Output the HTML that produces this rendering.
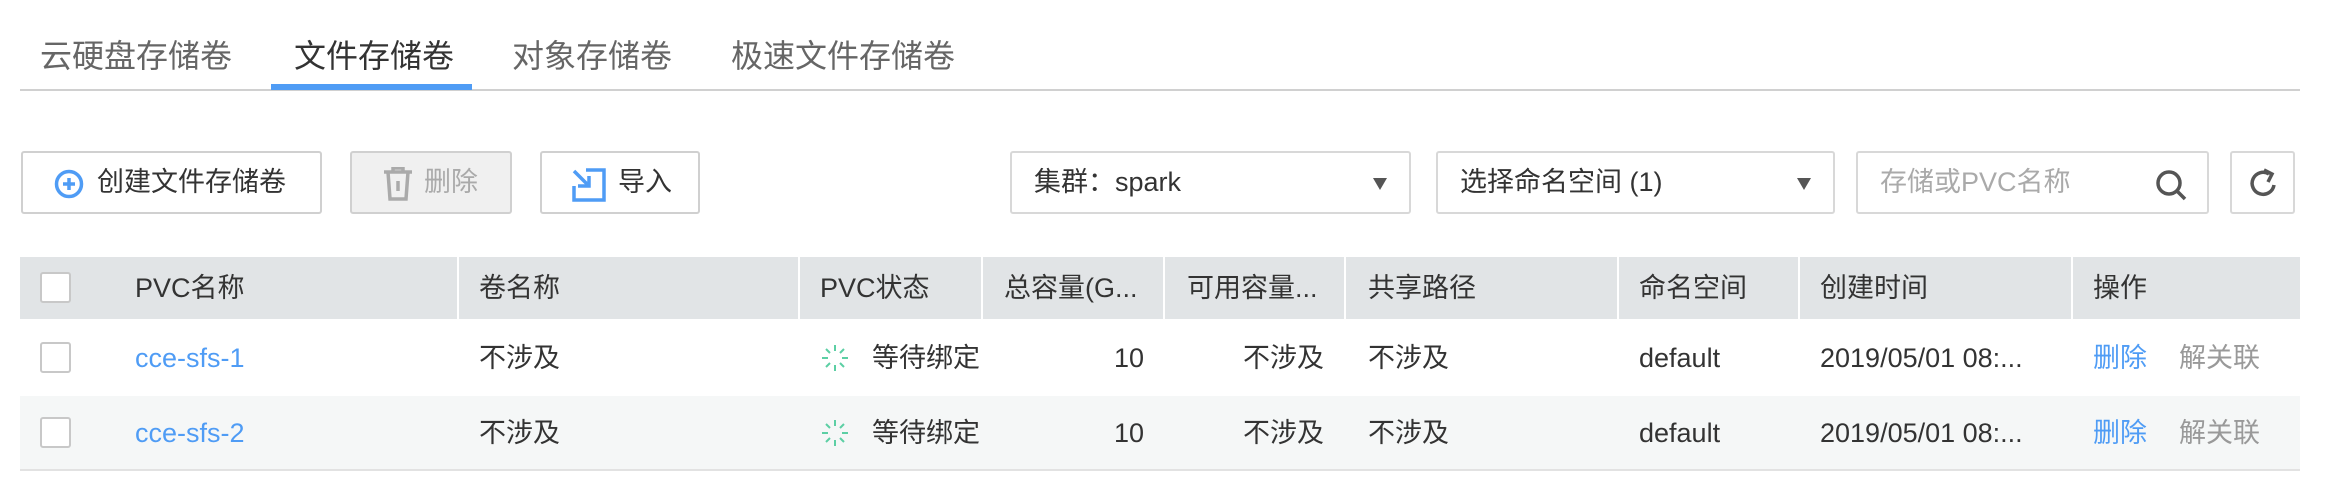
<!DOCTYPE html>
<html><head><meta charset="utf-8"><style>
*{margin:0;padding:0;box-sizing:border-box}
body{width:2326px;height:500px;background:#fff;position:relative;overflow:hidden;font-family:"Liberation Sans","Noto Sans CJK SC",sans-serif;color:#333}
.a{position:absolute;white-space:nowrap}
.tab{position:absolute;top:34px;font-size:32px;color:#666;line-height:44px}
.btn{position:absolute;top:151px;height:63px;border:2px solid #d0d0d0;border-radius:3px;background:#fff;font-size:27px;line-height:59px}
.sel{position:absolute;top:151px;height:63px;border:2px solid #d8d8d8;border-radius:3px;font-size:27px;line-height:59px;padding-left:22px}
.tri{position:absolute;right:22px;top:25px;width:0;height:0;border-left:7px solid transparent;border-right:7px solid transparent;border-top:12px solid #555}
.hd{position:absolute;top:257px;height:62px;background:#e1e4e6;left:20px;width:2280px}
.vl{position:absolute;top:257px;height:62px;width:2px;background:#fff}
.t{position:absolute;font-size:27px;line-height:30px;white-space:nowrap}
.cb{position:absolute;left:40px;width:31px;height:31px;border:2px solid #c8c8c8;border-radius:3px;background:#fff}
</style></head><body>
<div class="tab" style="left:40px">云硬盘存储卷</div>
<div class="tab" style="left:294px;color:#333">文件存储卷</div>
<div class="tab" style="left:512px">对象存储卷</div>
<div class="tab" style="left:731px">极速文件存储卷</div>
<div class="a" style="left:20px;top:89px;width:2280px;height:2px;background:#d0d0d0"></div>
<div class="a" style="left:271px;top:84px;width:201px;height:6px;background:#4f9cf5"></div>

<div class="btn" style="left:21px;width:301px">
<svg class="a" style="left:31px;top:16px" width="30" height="30" viewBox="0 0 30 30"><circle cx="15" cy="15" r="12.5" fill="none" stroke="#4f9cf5" stroke-width="3.5"/><path d="M15 9v12M9 15h12" stroke="#4f9cf5" stroke-width="3.5"/></svg>
<span class="a" style="left:74px">创建文件存储卷</span></div>
<div class="btn" style="left:350px;width:162px;background:#f0f0f0;color:#aaa">
<svg class="a" style="left:30px;top:14px" width="32" height="34" viewBox="0 0 32 34"><path d="M2 5h28M11 5V1h10v4M6 5l2 27h16l2-27M16 14v10" fill="none" stroke="#aaa" stroke-width="3.5"/></svg>
<span class="a" style="left:72px">删除</span></div>
<div class="btn" style="left:540px;width:160px">
<svg class="a" style="left:30px;top:15px" width="34" height="34" viewBox="0 0 34 34"><path d="M14 2h18v30H2V18" fill="none" stroke="#4f9cf5" stroke-width="3.5"/><path d="M2 3l14 14M6 18h11V8" fill="none" stroke="#4f9cf5" stroke-width="3.5"/></svg>
<span class="a" style="left:76px">导入</span></div>

<div class="sel" style="left:1010px;width:401px">集群：spark<div class="tri"></div></div>
<div class="sel" style="left:1436px;width:399px">选择命名空间 (1)<div class="tri"></div></div>
<div class="sel" style="left:1856px;width:353px;color:#aaa">存储或PVC名称
<svg class="a" style="right:20px;top:16px" width="32" height="32" viewBox="0 0 32 32"><circle cx="14" cy="14" r="11" fill="none" stroke="#555" stroke-width="3.5"/><path d="M22 22l8 8" stroke="#555" stroke-width="3.5"/></svg></div>
<div class="sel" style="left:2230px;width:65px;padding:0">
<svg class="a" style="left:15px;top:14px" width="32" height="32" viewBox="0 0 32 32"><path d="M27 18A11 11 0 1 1 22 7" fill="none" stroke="#555" stroke-width="3.5"/><path d="M17 3l8 4-4 8" fill="none" stroke="#555" stroke-width="3.5"/></svg></div>

<div class="hd"></div>
<div class="vl" style="left:457px"></div><div class="vl" style="left:798px"></div><div class="vl" style="left:981px"></div><div class="vl" style="left:1163px"></div><div class="vl" style="left:1344px"></div><div class="vl" style="left:1617px"></div><div class="vl" style="left:1798px"></div><div class="vl" style="left:2071px"></div>
<div class="cb" style="top:272px"></div>
<div class="t" style="top:273px;left:135px">PVC名称</div>
<div class="t" style="top:273px;left:479px">卷名称</div>
<div class="t" style="top:273px;left:820px">PVC状态</div>
<div class="t" style="top:273px;left:1004px">总容量(G...</div>
<div class="t" style="top:273px;left:1187px">可用容量...</div>
<div class="t" style="top:273px;left:1368px">共享路径</div>
<div class="t" style="top:273px;left:1639px">命名空间</div>
<div class="t" style="top:273px;left:1820px">创建时间</div>
<div class="t" style="top:273px;left:2093px">操作</div>

<div class="a" style="left:20px;top:396px;width:2280px;height:74px;background:#f5f7f7"></div>
<div class="a" style="left:20px;top:469px;width:2280px;height:2px;background:#e2e2e2"></div>

<div class="cb" style="top:342px"></div>
<div class="t" style="top:343px;left:135px;color:#4f9cf5">cce-sfs-1</div>
<div class="t" style="top:343px;left:479px">不涉及</div>
<svg class="a" style="left:820px;top:343px" width="30" height="30" viewBox="0 0 30 30"><g stroke="#5ccfa4" stroke-width="2"><path d="M15 2v6M15 22v6M2 15h6M22 15h6M6 6l4 4M20 20l4 4M24 6l-4 4M10 20l-4 4"/></g></svg>
<div class="t" style="top:343px;left:872px">等待绑定</div>
<div class="t" style="top:343px;left:1114px">10</div>
<div class="t" style="top:343px;left:1243px">不涉及</div>
<div class="t" style="top:343px;left:1368px">不涉及</div>
<div class="t" style="top:343px;left:1639px">default</div>
<div class="t" style="top:343px;left:1820px">2019/05/01 08:...</div>
<div class="t" style="top:343px;left:2093px;color:#4f9cf5">删除</div>
<div class="t" style="top:343px;left:2179px;color:#999">解关联</div>

<div class="cb" style="top:417px"></div>
<div class="t" style="top:418px;left:135px;color:#4f9cf5">cce-sfs-2</div>
<div class="t" style="top:418px;left:479px">不涉及</div>
<svg class="a" style="left:820px;top:418px" width="30" height="30" viewBox="0 0 30 30"><g stroke="#5ccfa4" stroke-width="2"><path d="M15 2v6M15 22v6M2 15h6M22 15h6M6 6l4 4M20 20l4 4M24 6l-4 4M10 20l-4 4"/></g></svg>
<div class="t" style="top:418px;left:872px">等待绑定</div>
<div class="t" style="top:418px;left:1114px">10</div>
<div class="t" style="top:418px;left:1243px">不涉及</div>
<div class="t" style="top:418px;left:1368px">不涉及</div>
<div class="t" style="top:418px;left:1639px">default</div>
<div class="t" style="top:418px;left:1820px">2019/05/01 08:...</div>
<div class="t" style="top:418px;left:2093px;color:#4f9cf5">删除</div>
<div class="t" style="top:418px;left:2179px;color:#999">解关联</div>
</body></html>
